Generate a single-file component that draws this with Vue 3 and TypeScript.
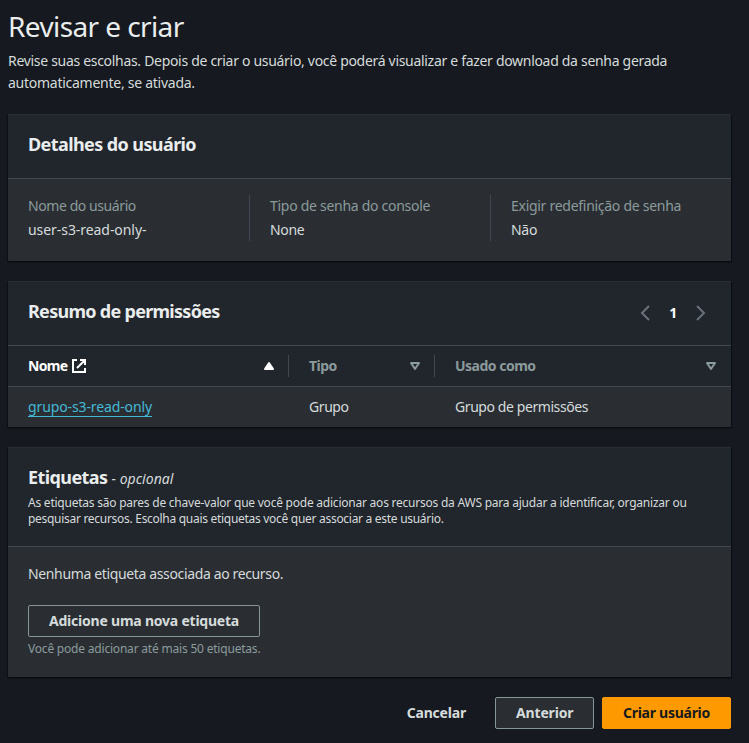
<script setup lang="ts">
interface Detail {
  label: string
  value: string
  tone: string
}

interface Permission {
  name: string
  type: string
  usedAs: string
}

const details: Detail[] = [
  { label: 'Nome do usuário', value: 'user-s3-read-only-', tone: 'tight' },
  { label: 'Tipo de senha do console', value: 'None', tone: '' },
  { label: 'Exigir redefinição de senha', value: 'Não', tone: '' },
]

const permissions: Permission[] = [
  { name: 'grupo-s3-read-only', type: 'Grupo', usedAs: 'Grupo de permissões' },
]
</script>

<template>
  <main class="page">
    <header class="intro">
      <h1>Revisar e criar</h1>
      <p>
        Revise suas escolhas. Depois de criar o usuário, você poderá visualizar e fazer download da senha gerada<br />
        <span class="second-line">automaticamente, se ativada.</span>
      </p>
    </header>

    <section class="card">
      <div class="card-header">
        <h2>Detalhes do usuário</h2>
      </div>
      <dl class="details">
        <div v-for="item in details" :key="item.label" class="detail">
          <dt>{{ item.label }}</dt>
          <dd :class="item.tone">{{ item.value }}</dd>
        </div>
      </dl>
    </section>

    <section class="card">
      <div class="card-header">
        <h2 class="narrow">Resumo de permissões</h2>
        <nav class="pagination">
          <svg class="icon" viewBox="0 0 16 16"><path d="M12 1 5 8l7 7" /></svg>
          <span class="page-number">1</span>
          <svg class="icon" viewBox="0 0 16 16"><path d="m4 1 7 7-7 7" /></svg>
        </nav>
      </div>
      <div class="row head">
        <div class="cell sorted">
          <span class="name-label">
            Nome
            <svg class="icon" viewBox="0 0 16 16">
              <path d="M9 2h5v5M6 10l8-8M14 10v4H2V2h4" />
            </svg>
          </span>
          <svg class="icon caret filled" viewBox="0 0 16 16"><path d="M4 11h8L8 5z" /></svg>
        </div>
        <div class="cell">
          <span>Tipo</span>
          <svg class="icon caret" viewBox="0 0 16 16"><path d="M4 5h8l-4 6z" /></svg>
        </div>
        <div class="cell">
          <span>Usado como</span>
          <svg class="icon caret" viewBox="0 0 16 16"><path d="M4 5h8l-4 6z" /></svg>
        </div>
      </div>
      <div v-for="item in permissions" :key="item.name" class="row body-row">
        <div class="cell"><a class="link">{{ item.name }}</a></div>
        <div class="cell">{{ item.type }}</div>
        <div class="cell">{{ item.usedAs }}</div>
      </div>
    </section>

    <section class="card">
      <div class="card-header tags-header">
        <h2>Etiquetas <em>- opcional</em></h2>
        <p>
          As etiquetas são pares de chave-valor que você pode adicionar aos recursos da AWS para ajudar a identificar, organizar ou<br />
          <span class="second-line">pesquisar recursos. Escolha quais etiquetas você quer associar a este usuário.</span>
        </p>
      </div>
      <div class="tags-body">
        <p class="empty">Nenhuma etiqueta associada ao recurso.</p>
        <button class="button add" type="button">Adicione uma nova etiqueta</button>
        <p class="hint">Você pode adicionar até mais 50 etiquetas.</p>
      </div>
    </section>

    <footer class="actions">
      <button class="button plain" type="button">Cancelar</button>
      <button class="button previous" type="button">Anterior</button>
      <button class="button primary" type="button">Criar usuário</button>
    </footer>
  </main>
</template>

<style>
body {
  margin: 0;
  background: #16191f;
}
</style>

<style scoped>
.page {
  box-sizing: border-box;
  min-height: 743px;
  padding: 8px 18px 14px 8px;
  display: flex;
  flex-direction: column;
  gap: 20px;
  background: #16191f;
  color: #d5dbdb;
  font: 400 14px/22px "Noto Sans", "Open Sans", sans-serif;
  letter-spacing: -0.305px;
  white-space: nowrap;
}

h1,
h2,
p,
dl,
dd {
  margin: 0;
}

h1 {
  margin-bottom: 6px;
  color: #eaeded;
  font-weight: 400;
  font-size: 28px;
  line-height: 36px;
  letter-spacing: -0.6px;
}

.intro .second-line {
  letter-spacing: -0.26px;
}

.card {
  border-top: 1px solid #2a2e33;
  background: #2a2e33;
  box-shadow: 0 1px 1px #0a0c10, 1px 1px 1px rgba(0, 0, 0, 0.35), -1px 1px 1px rgba(0, 0, 0, 0.25);
}

.card-header {
  box-sizing: border-box;
  height: 64px;
  padding: 18px 20px 0;
  display: flex;
  justify-content: space-between;
  align-items: flex-start;
  border-bottom: 1px solid #414750;
  background: #21252c;
}

h2 {
  color: #eaeded;
  font-weight: 700;
  font-size: 18px;
  line-height: 22px;
  letter-spacing: -0.59px;
}

h2.narrow {
  letter-spacing: -0.71px;
}

.details {
  display: grid;
  grid-template-columns: repeat(3, 1fr);
  padding: 16px 0 20px;
}

.detail {
  display: flex;
  flex-direction: column;
  gap: 2px;
  padding-left: 20px;
}

.detail + .detail {
  border-left: 1px solid #414750;
}

dt {
  color: #8b9b9b;
  letter-spacing: -0.28px;
}

.detail:first-child dt {
  letter-spacing: -0.42px;
}

.tight {
  letter-spacing: -0.06px;
}

.icon {
  width: 16px;
  height: 16px;
  flex: none;
  fill: none;
  stroke: currentColor;
  stroke-width: 2;
}

.pagination {
  display: flex;
  align-items: center;
  justify-content: space-between;
  width: 72px;
  height: 22px;
  margin: 2px 2px 0 0;
  color: #687078;
}

.page-number {
  color: #fff;
  font-weight: 700;
}

.row {
  display: grid;
  grid-template-columns: 280px 146px 1fr;
  height: 40px;
  align-items: center;
}

.head {
  border-bottom: 1px solid #414750;
  background: #21252c;
  color: #8b9b9b;
  font-weight: 700;
  letter-spacing: -0.5px;
}

.cell {
  display: flex;
  align-items: center;
  justify-content: space-between;
  padding: 0 11px 0 20px;
}

.cell + .cell {
  padding-left: 21px;
}

.head .cell + .cell {
  padding-left: 20px;
  border-left: 1px solid #414750;
}

.head .cell:last-child {
  padding-right: 12px;
}

.sorted {
  color: #fff;
  letter-spacing: -0.7px;
}

.name-label {
  display: flex;
  align-items: center;
  gap: 4px;
}

.caret {
  stroke-linejoin: round;
}

.filled {
  fill: currentColor;
}

.body-row {
  letter-spacing: -0.42px;
}

.link {
  height: 19px;
  line-height: 20px;
  border-bottom: 1px solid #44b9d6;
  color: #44b9d6;
  letter-spacing: -0.12px;
}

.tags-header {
  height: 99px;
  flex-direction: column;
  justify-content: flex-start;
  gap: 5px;
}

em {
  color: #d5dbdb;
  font-weight: 400;
  font-size: 14px;
  letter-spacing: 0.05px;
}

.tags-header p {
  font-size: 12px;
  line-height: 16px;
  letter-spacing: -0.23px;
}

.tags-header .second-line {
  letter-spacing: -0.29px;
}

.tags-body {
  padding: 16px 20px 20px;
  display: flex;
  flex-direction: column;
  align-items: flex-start;
}

.empty {
  margin-bottom: 20px;
  letter-spacing: -0.36px;
}

.hint {
  margin-top: 4px;
  color: #8b9b9b;
  font-size: 12px;
  line-height: 16px;
  letter-spacing: -0.2px;
}

.button {
  box-sizing: border-box;
  height: 32px;
  padding: 0 20px;
  border: 1px solid #879596;
  border-radius: 2px;
  background: #2a2e33;
  color: #d5dbdb;
  font: 700 14px/22px "Noto Sans", "Open Sans", sans-serif;
  letter-spacing: -0.18px;
}

.add {
  width: 232px;
  letter-spacing: -0.22px;
}

.actions {
  display: flex;
  justify-content: flex-end;
  gap: 8px;
}

.plain {
  border-color: transparent;
  background: transparent;
  letter-spacing: -0.2px;
}

.previous {
  width: 99px;
  letter-spacing: -0.16px;
}

.primary {
  width: 129px;
  border-color: #f90;
  background: #f90;
  color: #16191f;
  letter-spacing: -0.27px;
}
</style>
